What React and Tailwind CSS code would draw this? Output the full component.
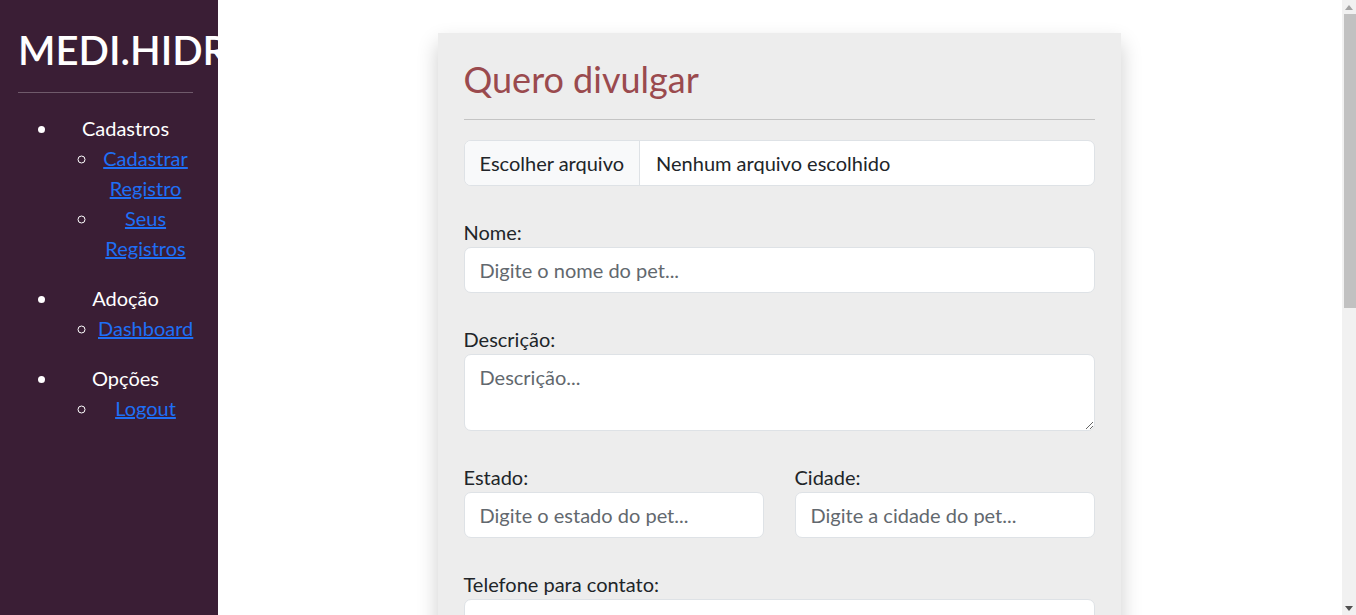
import React from "react";

function Field({ label, placeholder }) {
  return (
    <div className="flex flex-col">
      <label className="leading-[30px]">{label}</label>
      <input
        type="text"
        placeholder={placeholder}
        className="h-[46px] w-full rounded-[7px] border border-[#dee2e6] bg-white px-[15px] text-[20px] text-[#212529] outline-none placeholder:text-[#62686e]"
      />
    </div>
  );
}

function Sidebar() {
  return (
    <aside className="w-[218px] shrink-0 overflow-hidden bg-[#3a1e35] pl-[18px] pr-[25px] pt-[26px] text-white">
      <h1 className="whitespace-nowrap text-[40px] font-semibold leading-[48px]">MEDI.HIDRO</h1>
      <hr className="mt-[18px] border-t border-[#6f5a6b]" />
      <ul className="mt-[20px] list-disc pl-[40px] leading-[30px] marker:text-white">
        <li className="mb-[20px] text-center">
          Cadastros
          <ul className="list-[circle] pl-[40px] marker:text-[#d8d0d6]">
            <li>
              <a href="#" className="text-[#1e6ff6] underline">Cadastrar Registro</a>
            </li>
            <li>
              <a href="#" className="text-[#1e6ff6] underline">Seus Registros</a>
            </li>
          </ul>
        </li>
        <li className="mb-[20px] text-center">
          Adoção
          <ul className="list-[circle] pl-[40px] marker:text-[#d8d0d6]">
            <li>
              <a href="#" className="text-[#1e6ff6] underline">Dashboard</a>
            </li>
          </ul>
        </li>
        <li className="text-center">
          Opções
          <ul className="list-[circle] pl-[40px] marker:text-[#d8d0d6]">
            <li>
              <a href="#" className="text-[#1e6ff6] underline">Logout</a>
            </li>
          </ul>
        </li>
      </ul>
    </aside>
  );
}

// drawn scrollbar, the headless page hides the real one
function ScrollBar() {
  return (
    <div className="sticky top-0 flex h-screen w-[14px] shrink-0 flex-col bg-[#f1f1f1]">
      <div className="flex h-[14px] items-center justify-center">
        <svg width="8" height="5" viewBox="0 0 8 5"><path d="M0 5 L4 0 L8 5 Z" fill="#a3a3a3" /></svg>
      </div>
      <div className="ml-[2px] h-[294px] w-[12px] bg-[#c1c1c1]" />
      <div className="flex-1" />
      <div className="flex h-[14px] items-center justify-center">
        <svg width="8" height="5" viewBox="0 0 8 5"><path d="M0 0 L8 0 L4 5 Z" fill="#505050" /></svg>
      </div>
    </div>
  );
}

export default function App() {
  return (
    <div className="flex min-h-screen text-[20px] text-[#212529]" style={{ fontFamily: "Lato, 'Liberation Sans', sans-serif" }}>
      <Sidebar />
      <main className="flex-1 bg-white pt-[33px] pb-[40px] pr-[2px]">
        <div className="mx-auto w-[683px] bg-[#ededed] px-[26px] pt-[25px] pb-[30px] shadow-[0_10px_20px_rgba(0,0,0,0.2)]">
          <h2 className="text-[36px] leading-[43px] text-[#9a4a4e]">Quero divulgar</h2>
          <hr className="mt-[18px] border-t border-[#c4c4c4]" />
          <div className="mt-[20px] flex h-[46px] overflow-hidden rounded-[7px] border border-[#dee2e6] bg-white">
            <div className="flex items-center whitespace-nowrap border-r border-[#dee2e6] bg-[#f8f9fa] px-[15px]">Escolher arquivo</div>
            <div className="flex items-center whitespace-nowrap px-[16px]">Nenhum arquivo escolhido</div>
          </div>
          <div className="mt-[31px] flex flex-col gap-[31px]">
            <Field label="Nome:" placeholder="Digite o nome do pet..." />
            <div className="flex flex-col">
              <label className="leading-[30px]">Descrição:</label>
              <textarea
                placeholder="Descrição..."
                className="h-[77px] w-full rounded-[7px] border border-[#dee2e6] bg-white px-[15px] py-[7px] text-[20px] leading-[30px] outline-none placeholder:text-[#62686e]"
              />
            </div>
            <div className="grid grid-cols-2 gap-[31px]">
              <Field label="Estado:" placeholder="Digite o estado do pet..." />
              <Field label="Cidade:" placeholder="Digite a cidade do pet..." />
            </div>
            <Field label="Telefone para contato:" placeholder="Digite o telefone..." />
            <Field label="Raça:" placeholder="Digite a raça do pet..." />
            <button className="h-[47px] w-full rounded-[7px] bg-[#9a4a4e] text-white">Cadastrar</button>
          </div>
        </div>
      </main>
      <ScrollBar />
    </div>
  );
}
